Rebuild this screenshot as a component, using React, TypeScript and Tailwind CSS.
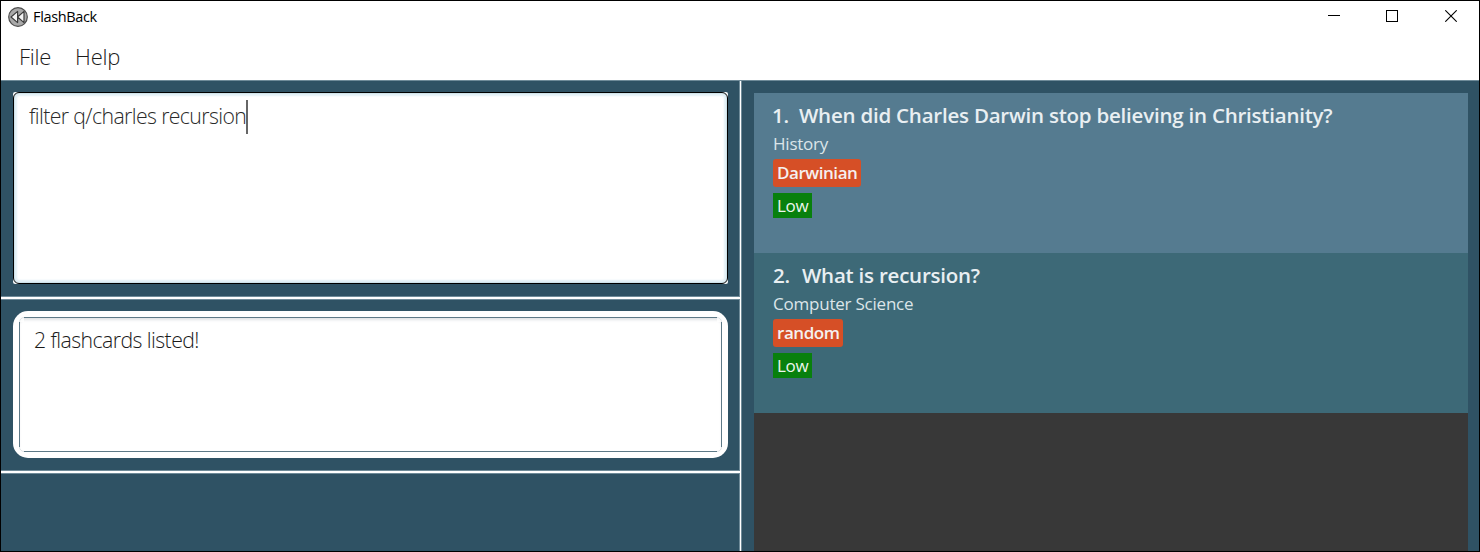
type Card = { n: number; question: string; topic: string; tag: string; level: string };

const cards: Card[] = [
  { n: 1, question: 'When did Charles Darwin stop believing in Christianity?', topic: 'History', tag: 'Darwinian', level: 'Low' },
  { n: 2, question: 'What is recursion?', topic: 'Computer Science', tag: 'random', level: 'Low' },
];

function AppIcon() {
  return (
    <svg width="20" height="20" viewBox="0 0 20 20" fill="none">
      <circle cx="10" cy="10" r="9.3" fill="#a9a9a9" stroke="#4c4c4c" strokeWidth="1.2" />
      <path d="M9.6 4.4v11.2L3 10zM16 4.4v11.2L9.6 10z" fill="#f4f4f4" stroke="#3c3c3c" strokeWidth="1.2" strokeLinejoin="round" />
    </svg>
  );
}

function TitleBar() {
  return (
    <header className="flex h-[33px] items-center pt-px pl-[7px] pr-[22px]">
      <div className="-mt-[3px] flex items-center">
        <AppIcon />
        <span className="ml-[5px] text-[14.5px] leading-5 tracking-[-0.35px] text-black">FlashBack</span>
      </div>
      <div className="-mt-1 ml-auto flex items-center">
        <svg width="12" height="12" viewBox="0 0 12 12" shapeRendering="crispEdges"><path d="M0 5.5h12" stroke="#000" /></svg>
        <svg className="ml-[46px]" width="12" height="12" viewBox="0 0 12 12" fill="none" shapeRendering="crispEdges"><path d="M.5.5h11v11H.5z" stroke="#000" /></svg>
        <svg className="ml-[47px]" width="12" height="12" viewBox="0 0 12 12" fill="none"><path d="M.3.3l11.4 11.4M11.7.3.3 11.7" stroke="#000" strokeWidth="1.1" /></svg>
      </div>
    </header>
  );
}

function Flashcard({ card, selected }: { card: Card; selected: boolean }) {
  return (
    <li className={`h-40 pl-[19px] pt-2 ${selected ? 'bg-[#557b90]' : 'bg-[#3d6977]'}`}>
      <div className="flex h-7 items-center whitespace-nowrap text-[20.5px] font-semibold tracking-[-0.22px] text-[#e9eff2]">
        <span className={selected ? '-ml-px mr-[10px]' : 'mr-3'}>{card.n}.</span>
        <span>{card.question}</span>
      </div>
      <div className="mt-px flex h-7 items-center text-[17px] tracking-[-0.22px] text-[#dce5e9]">{card.topic}</div>
      <div className="mt-px flex">
        <span className="flex h-7 items-center rounded-[3px] bg-[#d64f26] px-1 pb-px text-[17px] font-semibold tracking-[-0.45px] text-[#f5f0ef]">{card.tag}</span>
      </div>
      <div className="mt-[6px] flex">
        <span className="flex h-[25px] items-center bg-[#08800d] px-1 text-[17px] tracking-[-0.3px] text-[#eef6ee]">{card.level}</span>
      </div>
    </li>
  );
}

export default function App() {
  return (
    <div className="flex h-[552px] w-[1480px] flex-col overflow-hidden border border-black bg-white font-['Open_Sans','Noto_Sans',sans-serif]">
      <TitleBar />
      <nav className="flex h-[46px] gap-6 pl-[18px] pt-[7px] text-[22px] font-light leading-[30px] tracking-[-0.25px] text-[#1c1c1c]">
        <span>File</span>
        <span>Help</span>
      </nav>
      <div className="flex min-h-0 flex-1 border-t border-[#6f8b99] bg-[#2f5264]">
        <div className="flex w-[738px] flex-col">
          <div className="h-[215px] px-3 pt-[11px]">
            <div className="h-[192px] w-[715px] rounded-[2px] bg-[#f2f7f9]">
              <div className="flex h-full rounded-[6px] border border-black bg-white px-[15px] pt-[7px] shadow-[inset_0_0_0_1px_#cfe3ea,inset_0_0_2px_3px_#e2f0f6]">
                <span className="h-[34px] whitespace-nowrap text-[21.25px] font-light leading-[32px] tracking-[-0.61px] text-[#2a2a2a]">filter q/charles recursion</span>
                <span className="h-[34px] w-[2px] bg-[#666]" />
              </div>
            </div>
          </div>
          <div className="relative z-10 -mr-px h-1 border-y border-[#6f8b99] bg-white" />
          <div className="h-[170px] px-3 pt-[11px]">
            <div className="h-[147px] w-[715px] rounded-[15px] bg-white p-[6px]">
              <div className="relative h-[135px] w-[703px] rounded-[5px] border border-[#5d7987] px-[14px] pt-[6px] shadow-[inset_0_3px_3px_-1px_#e0e3e5]">
                <span className="whitespace-nowrap text-[21.25px] font-light leading-[32px] tracking-[-0.57px] text-[#1a1a1a]">2 flashcards listed!</span>
                <i className="absolute -left-px -top-px size-[5px] bg-white/80" />
                <i className="absolute -right-px -top-px size-[5px] bg-white/80" />
                <i className="absolute -bottom-px -left-px size-[5px] bg-white/80" />
                <i className="absolute -bottom-px -right-px size-[5px] bg-white/80" />
              </div>
            </div>
          </div>
          <div className="relative z-10 -mr-px h-1 border-y border-[#6f8b99] bg-white" />
        </div>
        <div className="w-[3px] border-x border-[#6f8b99] bg-white" />
        <div className="flex flex-1 pl-3 pr-[11px] pt-3">
          <ul className="flex-1 bg-[#383838]">
            {cards.map((card, i) => (
              <Flashcard key={card.n} card={card} selected={i === 0} />
            ))}
          </ul>
        </div>
      </div>
    </div>
  );
}
